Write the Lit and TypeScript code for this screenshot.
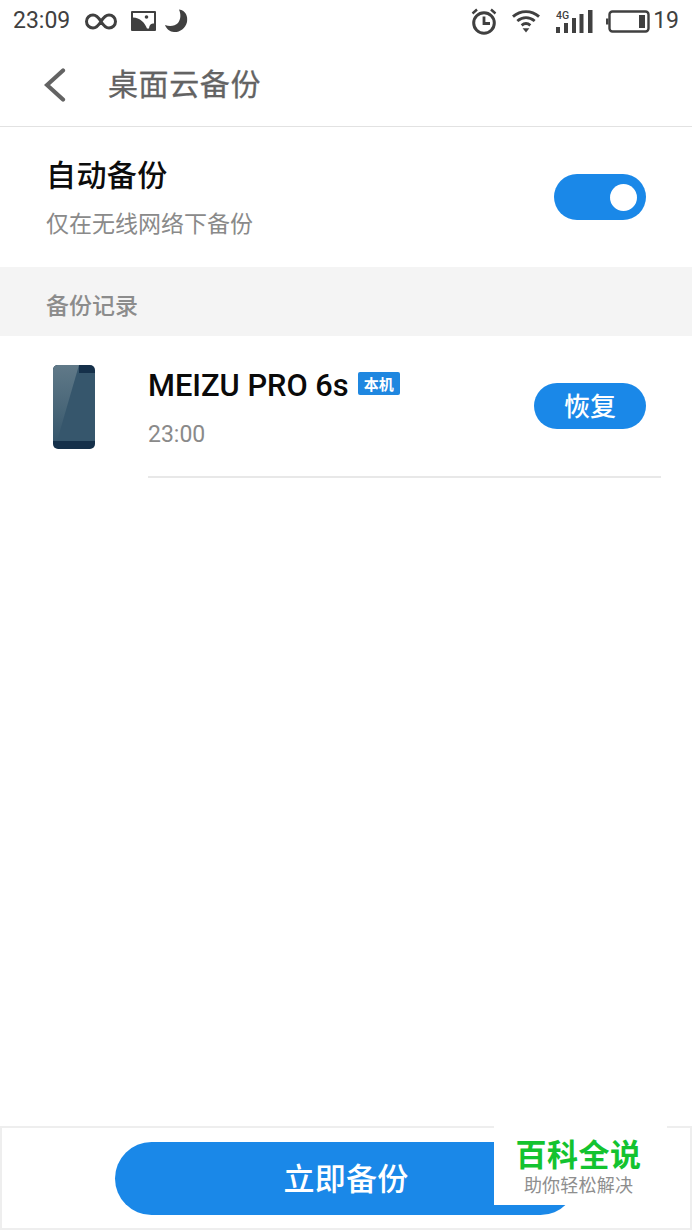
import { LitElement, html, css } from "lit";
import { customElement } from "lit/decorators.js";

@customElement("app-root")
export class AppRoot extends LitElement {
  static styles = css`
    :host { display: block; }
    * { box-sizing: border-box; }
    .page {
      position: relative; width: 692px; height: 1230px; background: #fff; display: flex; flex-direction: column;
      font-family: Roboto, "Noto Sans CJK SC", sans-serif; overflow: hidden;
    }
    .status { height: 44px; display: flex; align-items: center; justify-content: space-between; padding: 0 13px 2px 13px; color: #404040; flex: none; }
    .status-left, .status-right { display: flex; align-items: center; }
    .clock { font-size: 23px; line-height: 24px; margin-right: 14px; width: 58px; white-space: nowrap; }
    .batt-num { font-size: 23px; line-height: 24px; margin-left: 3px; }
    svg { display: block; flex: none; }
    .ml-inf { margin-right: 14px; }
    .ml-pic { margin-right: 8px; }
    .ml-alarm { margin-right: 15px; }
    .ml-wifi { margin-right: 16px; }
    .ml-sig { margin-right: 13px; }
    .header { height: 83px; flex: none; display: flex; align-items: center; padding: 0 0 0 44px; border-bottom: 1px solid #e2e2e2; }
    .back { margin-right: 42px; }
    .title { font-size: 30px; font-weight: 400; color: #636363; line-height: 40px; letter-spacing: 0.6px; -webkit-text-stroke: 0.3px #636363; }
    .auto { height: 140px; flex: none; display: flex; align-items: center; justify-content: space-between; padding: 0 46px 0 46px; }
    .auto-text { padding-top: 2px; }
    .auto-name { font-size: 30px; font-weight: 500; color: #0c0c0c; line-height: 40px; letter-spacing: 0.4px; }
    .auto-sub { font-size: 23px; color: #8a8a8a; line-height: 30px; margin-top: 14px; }
    .toggle { width: 92px; height: 46px; border-radius: 23px; background: #1a88e8; display: flex; align-items: center; justify-content: flex-end; padding-right: 9px; }
    .knob { width: 27px; height: 27px; border-radius: 50%; background: #fff; }
    .section { height: 69px; flex: none; background: #f4f4f4; display: flex; align-items: center; padding: 4px 0 0 46px; font-size: 23px; font-weight: 500; color: #8c8c8c; }
    .row { height: 142px; flex: none; display: flex; padding-left: 52px; }
    .phone { margin-top: 29px; margin-right: 52px; }
    .row-body { flex: 1; margin-right: 31px; border-bottom: 2px solid #e8e8e8; display: flex; align-items: flex-start; justify-content: space-between; padding-right: 15px; }
    .dev-title { display: flex; align-items: flex-start; margin-top: 31px; }
    .dev-name { font-size: 30.8px; font-weight: 500; color: #0a0a0a; line-height: 38px; }
    .tag { width: 42px; height: 23px; background: #1f87e0; color: #fff; font-size: 15px; font-weight: 700; border-radius: 2px; display: flex; align-items: center; justify-content: center; margin: 5px 0 0 9px; }
    .dev-time { font-size: 23px; color: #8a8a8a; line-height: 28px; margin-top: 16px; }
    .restore { width: 112px; height: 46px; margin-top: 47px; border-radius: 23px; background: #1a88e8; color: #fff; font-size: 26px; font-weight: 500; display: flex; align-items: center; justify-content: center; padding-bottom: 3px; }
    .spacer { flex: 1; }
    .bottom { height: 104px; flex: none; border: 2px solid #eeeeee; display: flex; justify-content: flex-start; padding: 14px 0 0 113px; }
    .cta { width: 462px; height: 73px; border-radius: 37px; background: #1a88e8; color: #fff; font-size: 31px; font-weight: 500; display: flex; align-items: center; justify-content: center; letter-spacing: 0.3px; padding-bottom: 5px; }
    .mark { position: absolute; left: 494px; top: 1124px; width: 173px; height: 81px; background: #fff; display: flex; flex-direction: column; align-items: center; padding-right: 4px; }
    .mark-a { font-size: 31px; font-weight: 700; color: #13c32f; line-height: 36px; margin-top: 14px; letter-spacing: 0.5px; }
    .mark-b { font-size: 18px; color: #8e8e8e; line-height: 22px; margin-top: 1px; letter-spacing: 0.2px; }
  `;

  render() {
    return html`<div class="page">
      <div class="status">
        <div class="status-left">
          <span class="clock">23:09</span>
          <svg class="ml-inf" width="32" height="17" viewBox="0 0 32 17" fill="none" stroke="#404040" stroke-width="3">
            <path d="M16 8.500C13 3.500 11 2 8 2a6.500 6.500 0 0 0 0 13c3 0 5-1.500 8-6.500s5-6.500 8-6.500a6.500 6.500 0 0 1 0 13c-3 0-5-1.500-8-6.500z"/>
          </svg>
          <svg class="ml-pic" width="25" height="20" viewBox="0 0 25 20">
            <rect width="25" height="20" rx="1" fill="#404040"/>
            <path fill="#fff" d="M2 2H23V12.500C20 12.500 18.500 13.500 18 17.500H16C14 12 9 6.500 2 6.500Z"/>
            <circle cx="15.500" cy="6" r="1.800" fill="#404040"/>
          </svg>
          <svg width="24" height="24" viewBox="0 0 24 24">
            <path fill="#404040" d="M15 .5c7 1 9 7 8 12.500-1.500 7-8 10.500-13 10C6 23 2.500 20 1 16c5 2 10 1 13-2 3-4 3-9 1-13.500z"/>
          </svg>
        </div>
        <div class="status-right">
          <svg class="ml-alarm" width="26" height="27" viewBox="0 0 26 27" fill="none" stroke="#404040">
            <circle cx="13" cy="15" r="10.300" stroke-width="3"/>
            <path d="M13 8.500V15.500H19" stroke-width="2.800"/>
            <path d="M1.500 5.500 6 1.500M24.500 5.500 20 1.500" stroke-width="2.400"/>
          </svg>
          <svg class="ml-wifi" width="28" height="24" viewBox="0 0 29 24" fill="none" stroke="#404040" stroke-width="3">
            <path d="M1 7.500C9 .5 20 .5 28 7.500"/>
            <path d="M5.500 12C11 7.500 18 7.500 23.500 12"/>
            <path d="M10 16.500c3-2.500 6-2.500 9 0"/>
            <path d="M11 19.500h7l-3.500 4.500z" fill="#404040" stroke="none"/>
          </svg>
          <svg class="ml-sig" width="37" height="23" viewBox="0 0 37 23" fill="#404040">
            <rect x="0" y="17" width="4" height="6"/>
            <rect x="8" y="13" width="4" height="10"/>
            <rect x="16" y="8" width="4" height="15"/>
            <rect x="23.500" y="4" width="4" height="19"/>
            <rect x="32" y="0" width="4.500" height="23"/>
            <text x="0" y="9" font-size="10.500" font-weight="500" font-family="Roboto, sans-serif">4G</text>
          </svg>
          <svg width="44" height="23" viewBox="0 0 44 23">
            <rect x="0" y="8.500" width="2.500" height="6" fill="#404040"/>
            <rect x="3.500" y="1.500" width="39" height="20" rx="3" fill="none" stroke="#404040" stroke-width="2.400"/>
            <rect x="33" y="5" width="6" height="13" fill="#404040"/>
          </svg>
          <span class="batt-num">19</span>
        </div>
      </div>

      <div class="header">
        <svg class="back" width="22" height="34" viewBox="0 0 22 34" fill="none" stroke="#636363" stroke-width="4.200" stroke-linecap="round">
          <path d="M19 2.500 3 17l16 14.500"/>
        </svg>
        <span class="title">桌面云备份</span>
      </div>

      <div class="auto">
        <div class="auto-text">
          <div class="auto-name">自动备份</div>
          <div class="auto-sub">仅在无线网络下备份</div>
        </div>
        <div class="toggle"><div class="knob"></div></div>
      </div>

      <div class="section">备份记录</div>

      <div class="row">
        <svg class="phone" width="44" height="84" viewBox="0 0 44 84">
          <defs>
            <linearGradient id="scr" x1="0" y1="0" x2="0" y2="1">
              <stop offset="0" stop-color="#607988"/>
              <stop offset="0.55" stop-color="#4a6779"/>
              <stop offset="1" stop-color="#36566c"/>
            </linearGradient>
          </defs>
          <rect x="1" y="0" width="42" height="84" rx="5" fill="#15304a"/>
          <path d="M1 5a5 5 0 0 1 5-5H27V8H43V76H1z" fill="#36566c"/>
          <path d="M1 5a5 5 0 0 1 5-5H27L5 76H1z" fill="url(#scr)"/>
        </svg>
        <div class="row-body">
          <div>
            <div class="dev-title">
              <span class="dev-name">MEIZU PRO 6s</span>
              <span class="tag">本机</span>
            </div>
            <div class="dev-time">23:00</div>
          </div>
          <div class="restore">恢复</div>
        </div>
      </div>

      <div class="spacer"></div>

      <div class="bottom"><div class="cta">立即备份</div></div>

      <div class="mark">
        <div class="mark-a">百科全说</div>
        <div class="mark-b">助你轻松解决</div>
      </div>
    </div>`;
  }
}
